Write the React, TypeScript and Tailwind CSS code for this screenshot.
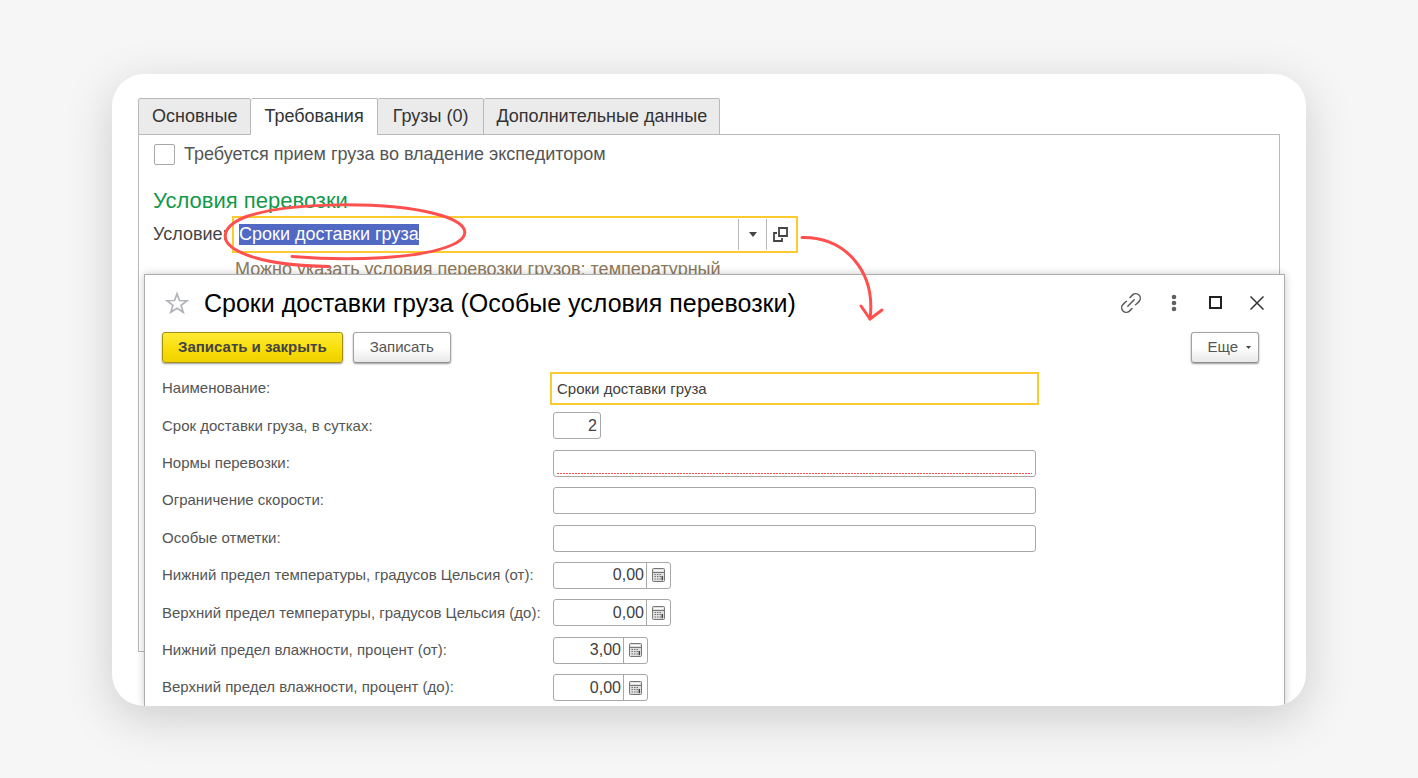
import React from "react";
import clsx from "clsx";

const tabs = [
  { title: "Основные", padding: "px-[13px]" },
  { title: "Требования", padding: "px-[13px]" },
  { title: "Грузы (0)", padding: "px-[15px]" },
  { title: "Дополнительные данные", padding: "px-3" },
];

const fields = [
  { id: "name", label: "Наименование:", value: "Сроки доставки груза", kind: "active" },
  { id: "days", label: "Срок доставки груза, в сутках:", value: "2", kind: "short" },
  { id: "norms", label: "Нормы перевозки:", value: "", kind: "required" },
  { id: "speed", label: "Ограничение скорости:", value: "", kind: "text" },
  { id: "notes", label: "Особые отметки:", value: "", kind: "text" },
  { id: "tempFrom", label: "Нижний предел температуры, градусов Цельсия (от):", value: "0,00", kind: "temperature" },
  { id: "tempTo", label: "Верхний предел температуры, градусов Цельсия (до):", value: "0,00", kind: "temperature" },
  { id: "humFrom", label: "Нижний предел влажности, процент (от):", value: "3,00", kind: "humidity" },
  { id: "humTo", label: "Верхний предел влажности, процент (до):", value: "0,00", kind: "humidity" },
];

function CalculatorIcon() {
  return (
    <svg width="13" height="14" viewBox="0 0 13 14" fill="none" stroke="#777">
      <rect x="0.5" y="0.5" width="12" height="13" rx="1" fill="#dedede" />
      <path d="M2 2.5h9" stroke="#fff" />
      <path d="M1 4.500h11" />
      <path d="M2.500 6.500h6.500M2.500 8.500h6.500M2.500 11h6.500" strokeWidth="1.200" strokeDasharray="1.500 1" />
      <path d="M10.300 8v4.200" stroke="#444" strokeWidth="1.500" />
    </svg>
  );
}

function StarIcon() {
  return (
    <svg width="24" height="24" viewBox="0 0 24 24" fill="none" stroke="#b0b3b8" strokeWidth="1.7">
      <path d="M12 2.8l2.5 6.7 7.6.2-6 4.5 2.1 7-6.2-4-6.2 4 2.1-7-6-4.5 7.6-.2z" />
    </svg>
  );
}

function LinkIcon() {
  return (
    <svg width="22" height="22" viewBox="0 0 22 22" fill="none" stroke="#5a5a5a" strokeWidth="1.5" strokeLinecap="round">
      <path d="M10 5.5l2.6-2.6a4.6 4.6 0 0 1 6.5 6.5l-2.3 2.3a4.4 4.4 0 0 1-1.3.9" />
      <path d="M12 16.5l-2.6 2.6a4.6 4.6 0 0 1-6.5-6.5l2.3-2.3a4.4 4.4 0 0 1 1.3-.9" />
      <path d="M7.8 14.2l6.4-6.4" />
    </svg>
  );
}

function Field({ id, value, kind }: { id: string; value: string; kind: string }) {
  if (kind === "temperature" || kind === "humidity") {
    return (
      <div
        className={clsx(
          "flex h-[27px] rounded-[3px] border border-[#a8a8a8] bg-white",
          kind === "temperature" ? "w-[118px]" : "w-[95px]"
        )}
      >
        <input
          id={id}
          defaultValue={value}
          className="min-w-0 flex-1 pr-[2px] text-right text-[16px] text-[#404040] outline-none"
        />
        <button
          type="button"
          aria-label="Калькулятор"
          className="flex w-6 shrink-0 items-center justify-center border-l border-[#a8a8a8]"
        >
          <CalculatorIcon />
        </button>
      </div>
    );
  }
  if (kind === "required") {
    return (
      <div className="h-[27px] w-[483px] rounded-[3px] border border-[#a8a8a8] bg-white px-[3px] pb-[2px]">
        <input
          id={id}
          defaultValue={value}
          className="block h-full w-full bg-[repeating-linear-gradient(90deg,#ff5050_0_2px,#ffffff_2px_3px)] bg-[length:100%_1px] bg-bottom bg-no-repeat outline-none"
        />
      </div>
    );
  }
  return (
    <input
      id={id}
      defaultValue={value}
      className={clsx(
        "h-[27px] rounded-[3px] border bg-white px-[3px] text-[#404040]",
        kind === "short" ? "w-12 border-[#a8a8a8] text-right text-[16px]" : "w-[483px] text-[15px]",
        kind === "text" && "border-[#a8a8a8] outline-none",
        kind === "active" && "rounded-none border-transparent outline-2 outline-offset-1 outline-[#fbcb34]"
      )}
    />
  );
}

function RequirementsPanel() {
  return (
    <section className="mb-[54px] flex flex-col [grid-area:1/1]">
      <div role="tablist" className="flex">
        {tabs.map((tab, i) => (
          <button
            key={tab.title}
            role="tab"
            aria-selected={i === 1}
            className={clsx(
              "h-[37px] rounded-t-[2px] border-t border-r border-[#b9b9b9] text-[18px] text-[#333]",
              tab.padding,
              i === 0 && "border-l",
              i === 1 ? "bg-white pb-px" : "border-b bg-[#ebebeb]"
            )}
          >
            {tab.title}
          </button>
        ))}
        <div className="flex-1 border-b border-[#b9b9b9]" />
      </div>
      <div className="flex-1 border-x border-b border-[#b9b9b9] px-[14px]">
        <label className="mt-[7px] flex h-6 items-center gap-[9px] pl-px text-[18px] text-[#555]">
          <input
            type="checkbox"
            className="h-[21px] w-[21px] appearance-none rounded-[2px] border border-[#a8a8a8] bg-white"
          />
          Требуется прием груза во владение экспедитором
        </label>
        <h2 className="mt-[21px] mb-px text-[22px] leading-[28px] text-[#12994b]">Условия перевозки</h2>
        <div className="flex items-center">
          <label htmlFor="condition" className="w-[79px] text-[18px] whitespace-nowrap text-[#444]">
            Условие:
          </label>
          <div className="relative">
            <div className="flex h-[37px] w-[566px] items-center border-2 border-[#fccb30] bg-white">
              <div className="flex flex-1 pl-[5px]">
                <input
                  id="condition"
                  defaultValue="Сроки доставки груза"
                  className="field-sizing-content h-[21px] bg-[#5269c4] text-[18px] text-white outline-none"
                />
              </div>
              <button
                aria-label="Выбрать"
                className="flex h-[31px] w-7 items-center justify-center border-l border-[#b9b9b9]"
              >
                <svg width="8" height="5" viewBox="0 0 8 5" fill="#444">
                  <path d="M0 0h8L4 5z" />
                </svg>
              </button>
              <button
                aria-label="Открыть"
                className="flex h-[31px] w-[30px] items-center justify-center border-l border-[#b9b9b9] pr-[2px]"
              >
                <svg width="15" height="15" viewBox="0 0 15 15" fill="none" stroke="#444" strokeWidth="1.8">
                  <path d="M6 1h8v8H6z" />
                  <path d="M4 6H1v8h8v-3" />
                </svg>
              </button>
            </div>
            {/* hand-drawn marks around the value and towards the opened form */}
            <svg
              className="pointer-events-none absolute -top-[16px] -left-[12px] z-20 overflow-visible"
              width="250"
              height="70"
              viewBox="220 200 250 70"
              fill="none"
              stroke="#ff5050"
              strokeWidth="3"
              strokeLinecap="round"
            >
              <path d="M292 256.500C350 261 420 259 452 245C474 235 467 222 436 214C390 202 295 201 248 216C223 225 217 240 238 251C257 261 290 266 329 266.500" />
            </svg>
            <svg
              className="pointer-events-none absolute top-[16px] left-[566px] z-20 overflow-visible"
              width="90"
              height="92"
              viewBox="798 232 90 92"
              fill="none"
              stroke="#ff5050"
              strokeWidth="3"
              strokeLinecap="round"
              strokeLinejoin="round"
            >
              <path d="M802 237.500C846 237 876 272 870 319" />
              <path d="M861 306L870 319L882 310" />
            </svg>
          </div>
        </div>
        <p className="mt-[5px] pl-[82px] text-[18px] leading-[22px] text-[#8c7b5d]">
          Можно указать условия перевозки грузов: температурный
        </p>
      </div>
    </section>
  );
}

function ConditionDialog() {
  const button =
    "h-[31px] rounded-[3px] border border-[#a3a3a3] border-b-[#8d8d8d] bg-linear-to-b from-white from-50% to-[#e8e8e8] text-[15px] text-[#555] shadow-[0_1px_2px_rgba(0,0,0,0.4)]";

  return (
    <section
      role="dialog"
      aria-labelledby="dialog-title"
      className="z-10 mt-[176px] -mr-[5px] ml-[6px] border border-b-0 border-[#adadad] bg-white pr-4 pb-[5px] pl-[17px] shadow-[0_0_8px_rgba(0,0,0,0.22)] [grid-area:1/1]"
    >
      <header className="mb-[2px] flex h-[55px] items-center">
        <button aria-label="В избранное" className="mr-[15px] ml-[3px]">
          <StarIcon />
        </button>
        <h1 id="dialog-title" className="flex-1 text-[25px] leading-[32px] text-black">
          Сроки доставки груза (Особые условия перевозки)
        </h1>
        <div className="flex items-center pr-1">
          <button aria-label="Ссылка" className="mr-[29px]">
            <LinkIcon />
          </button>
          <button aria-label="Меню" className="mr-[32px]">
            <svg width="6" height="18" viewBox="0 0 6 18" fill="#606060">
              <circle cx="3" cy="3" r="2.300" />
              <circle cx="3" cy="9" r="2.300" />
              <circle cx="3" cy="15" r="2.300" />
            </svg>
          </button>
          <button aria-label="Развернуть" className="mr-[28px]">
            <svg width="13" height="13" viewBox="0 0 13 13" fill="none" stroke="#222" strokeWidth="2">
              <path d="M1 1h11v11H1z" />
            </svg>
          </button>
          <button aria-label="Закрыть">
            <svg width="14" height="14" viewBox="0 0 14 14" fill="none" stroke="#333" strokeWidth="1.500">
              <path d="M.5.5l13 13M13.500.5l-13 13" />
            </svg>
          </button>
        </div>
      </header>

      <div className="flex pr-[9px]">
        <button className="mr-[10px] h-[31px] rounded-[3px] border border-[#a39013] bg-linear-to-b from-[#ffea33] via-[#fae00a] to-[#efd000] px-[15px] text-[15px] font-bold text-[#444] shadow-[0_1px_2px_rgba(0,0,0,0.4)]">
          Записать и закрыть
        </button>
        <button className={clsx(button, "px-4")}>Записать</button>
        <button className={clsx(button, "ml-auto flex items-center gap-2 pr-[7px] pl-[15px]")}>
          Еще
          <svg width="5" height="3" viewBox="0 0 5 3" fill="#444">
            <path d="M0 0h5L2.500 3z" />
          </svg>
        </button>
      </div>

      {/* rows share the free height evenly */}
      <form className="mt-[12px] grid min-h-[326px] content-between">
        {fields.map((field) => (
          <div key={field.id} className="flex items-center">
            <label htmlFor={field.id} className="w-[391px] shrink-0 text-[15px] whitespace-nowrap text-[#555]">
              {field.label}
            </label>
            <Field id={field.id} value={field.value} kind={field.kind} />
          </div>
        ))}
      </form>
    </section>
  );
}

export default function App() {
  return (
    <main className="min-h-screen bg-[#f6f6f6] px-28 pt-[74px] pb-[72px] font-['Liberation_Sans',Arial,sans-serif]">
      <div className="grid overflow-hidden rounded-[32px] bg-white px-[26px] pt-6 shadow-[0_12px_48px_rgba(0,0,0,0.17)]">
        <RequirementsPanel />
        <ConditionDialog />
      </div>
    </main>
  );
}
